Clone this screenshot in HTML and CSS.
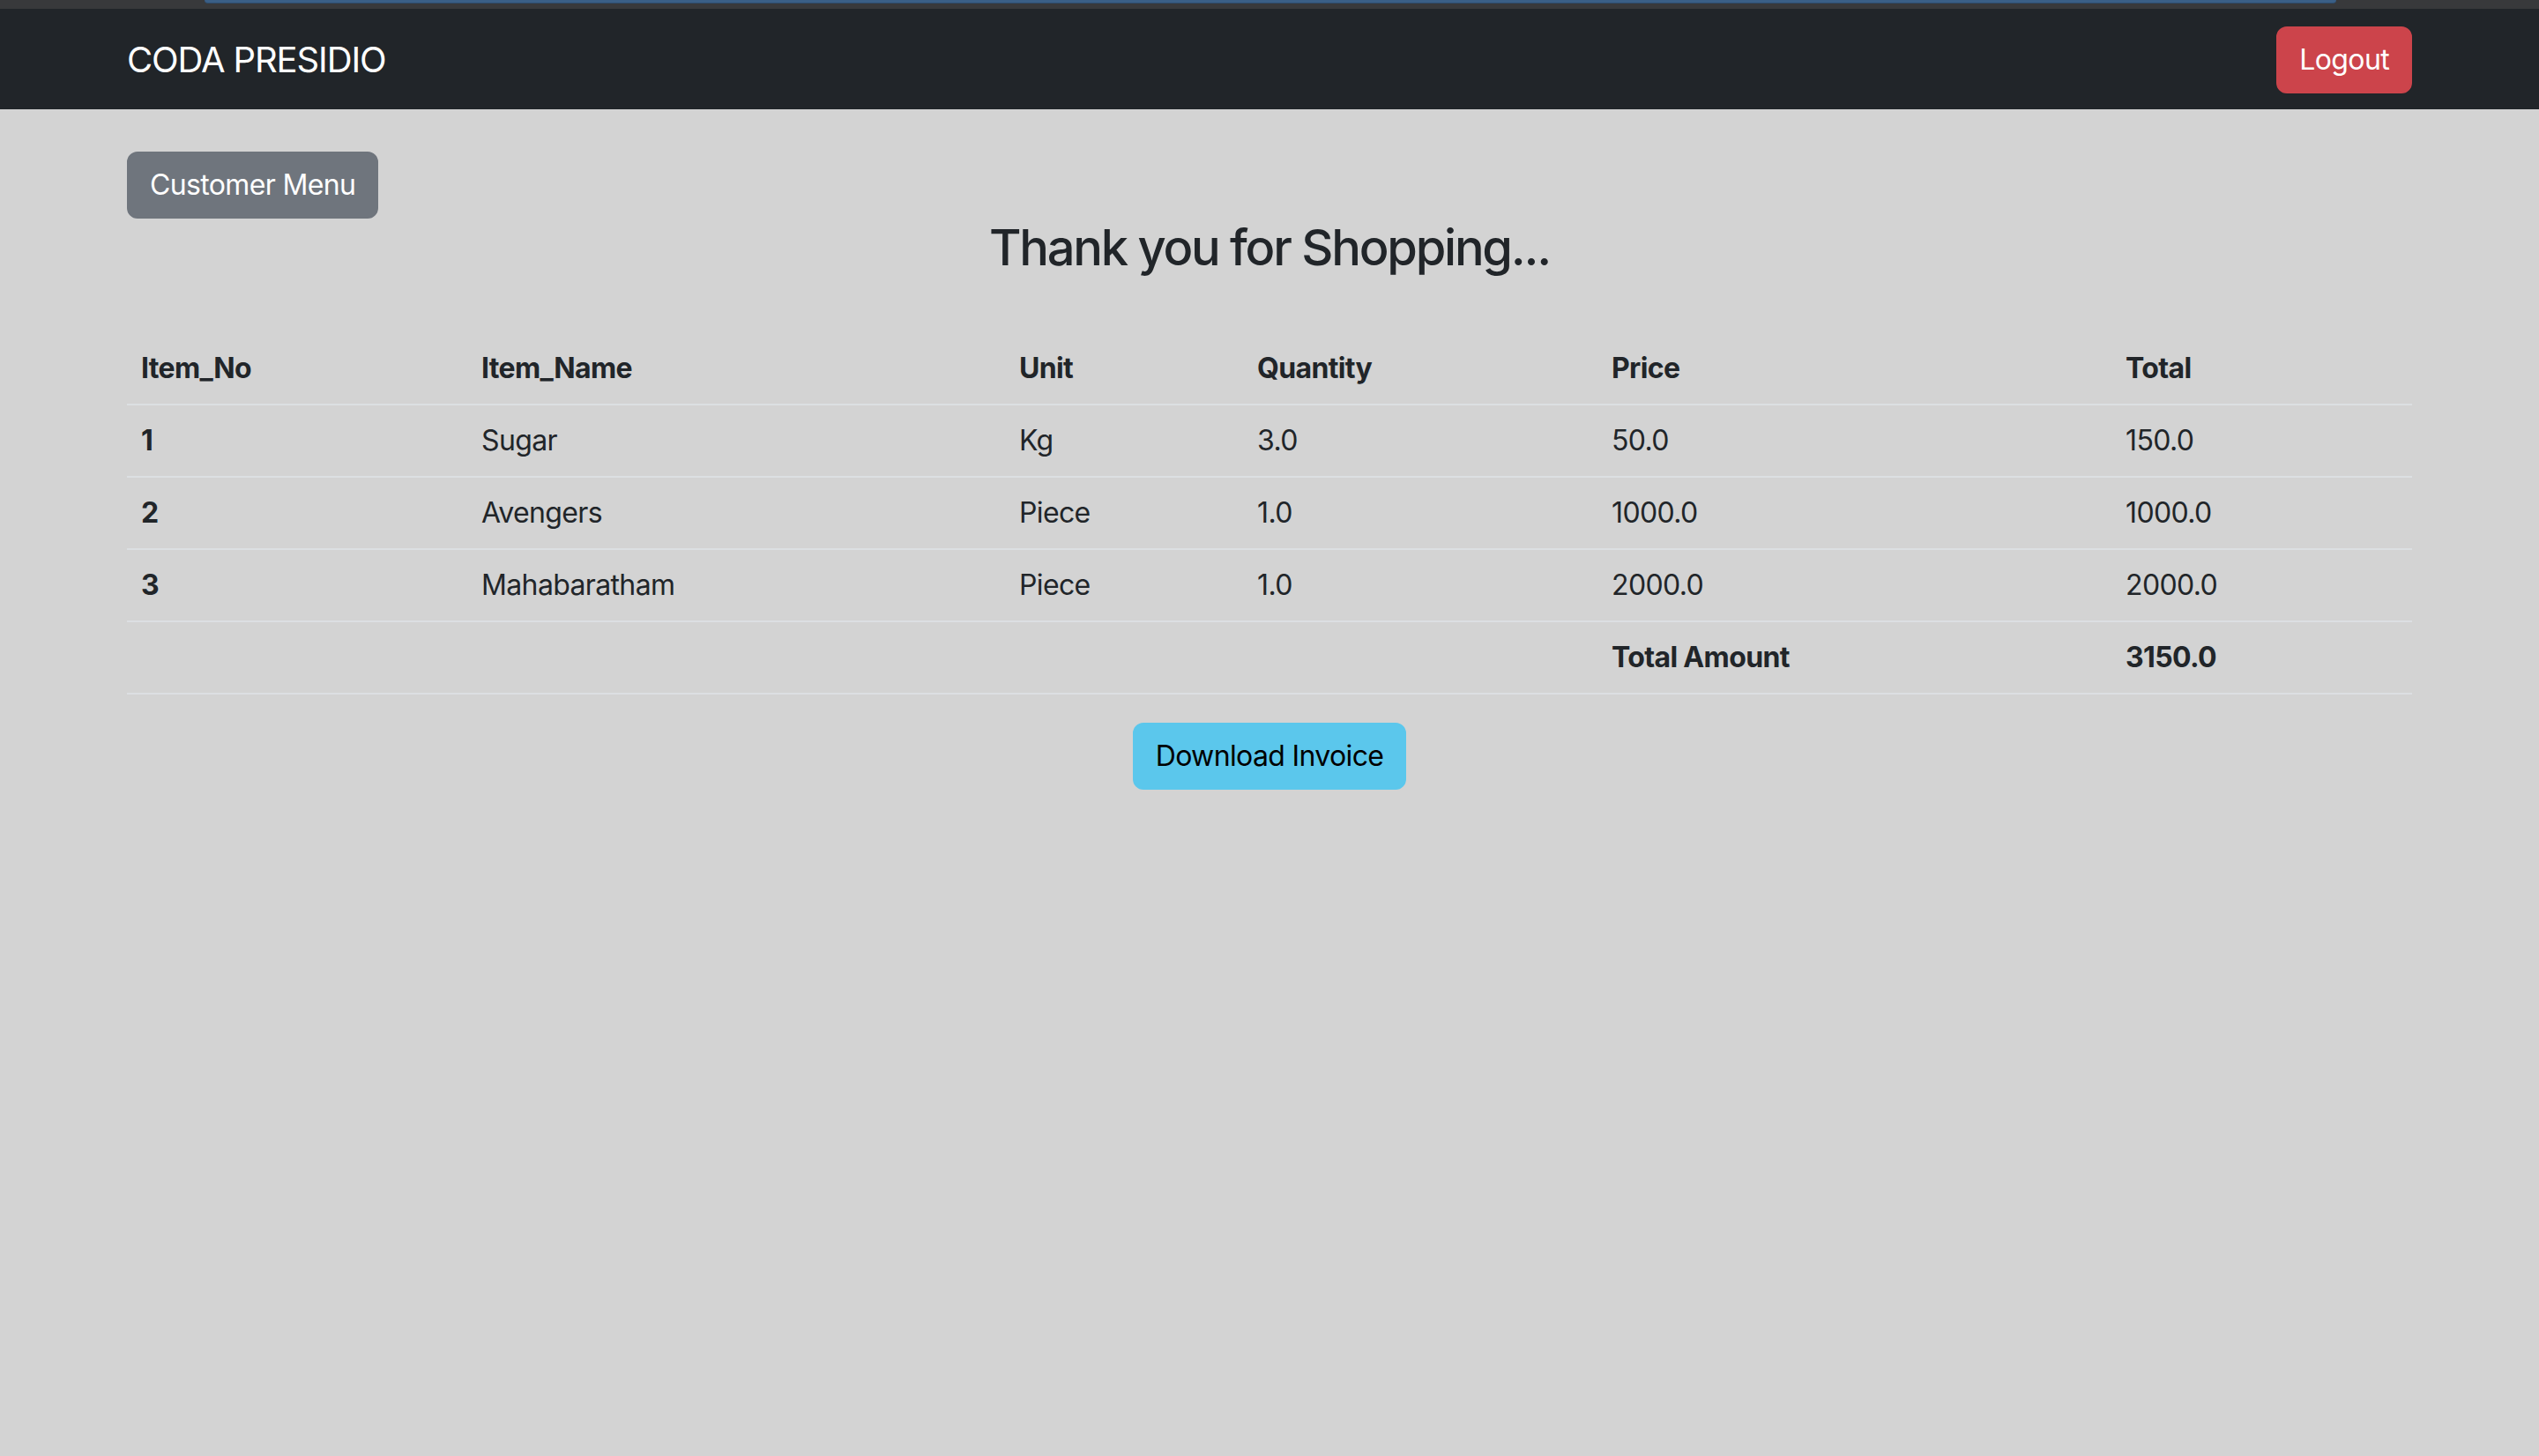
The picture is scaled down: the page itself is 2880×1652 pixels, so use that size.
FILE: index.html
```html
<!DOCTYPE html>
<html lang="en">
<head>
<meta charset="utf-8">
<title>CODA PRESIDIO</title>
<link rel="stylesheet" href="styles.css">
</head>
<body>
<div class="topstrip"><div class="tabbar"></div></div>
<nav class="navbar">
  <div class="container nav-inner">
    <span class="brand">CODA PRESIDIO</span>
    <button class="btn btn-danger">Logout</button>
  </div>
</nav>
<main class="container">
  <button class="btn btn-secondary menu-btn">Customer Menu</button>
  <h3 class="title">Thank you for Shopping...</h3>
  <table class="table">
    <colgroup>
      <col class="c1"><col class="c2"><col class="c3"><col class="c4"><col class="c5"><col class="c6">
    </colgroup>
    <thead>
      <tr><th>Item_No</th><th>Item_Name</th><th>Unit</th><th>Quantity</th><th>Price</th><th>Total</th></tr>
    </thead>
    <tbody>
      <tr><th>1</th><td>Sugar</td><td>Kg</td><td>3.0</td><td>50.0</td><td>150.0</td></tr>
      <tr><th>2</th><td>Avengers</td><td>Piece</td><td>1.0</td><td>1000.0</td><td>1000.0</td></tr>
      <tr><th>3</th><td>Mahabaratham</td><td>Piece</td><td>1.0</td><td>2000.0</td><td>2000.0</td></tr>
      <tr><td></td><td></td><td></td><td></td><th>Total Amount</th><th>3150.0</th></tr>
    </tbody>
  </table>
  <div class="actions">
    <button class="btn btn-info">Download Invoice</button>
  </div>
</main>
</body>
</html>
```
FILE: styles.css
```css
* { box-sizing: border-box; }
html, body { margin: 0; padding: 0; }
body {
  background: #d3d3d3;
  color: #212529;
  font-family: Inter, "Noto Sans", "Liberation Sans", sans-serif;
  font-size: 32px;
  line-height: 48px;
  letter-spacing: -0.02em;
  min-height: 1652px;
}
.topstrip {
  height: 10px;
  background: #38393b;
  padding: 0 230px;
}
.tabbar {
  height: 4px;
  margin: 0 0 0 2px;
  width: 2418px;
  background: #3a5f86;
  border-bottom: 1px solid #2e4b6a;
  border-radius: 0 0 6px 6px;
}
.container {
  width: 2592px;
  margin: 0 auto;
}
.navbar {
  background: #212529;
  padding: 20px 0 18px;
}
.nav-inner {
  display: flex;
  align-items: center;
  justify-content: space-between;
}
.brand {
  color: #fff;
  font-size: 40px;
  line-height: 60px;
  letter-spacing: -0.028em;
}
.btn {
  font-family: inherit;
  font-size: 32px;
  line-height: 48px;
  letter-spacing: -0.02em;
  padding: 12px 24px;
  border: 2px solid transparent;
  border-radius: 12px;
  cursor: pointer;
}
.btn-danger { background: #cc444b; border-color: #cc444b; color: #fff; }
.btn-secondary { background: #6f757d; border-color: #6f757d; color: #fff; }
.btn-info { background: #5bc7ec; border-color: #5bc7ec; color: #000; }
.menu-btn { margin-top: 48px; display: block; }
.title {
  font-size: 56px;
  line-height: 1.2;
  font-weight: 500;
  letter-spacing: -0.04em;
  margin: 0 0 16px;
  text-align: center;
}
.table {
  width: 100%;
  border-collapse: collapse;
  table-layout: fixed;
  margin: 63px 0 32px;
}
.c1 { width: 386px; }
.c2 { width: 610px; }
.c3 { width: 270px; }
.c4 { width: 402px; }
.c5 { width: 583px; }
.c6 { width: 341px; }
.table th, .table td {
  padding: 16px;
  text-align: left;
  border-bottom: 2px solid #dcdfe2;
  font-size: 32px;
  line-height: 48px;
}
.table th { font-weight: 700; }
.table td { font-weight: 400; }
.actions { display: flex; justify-content: center; }
```
